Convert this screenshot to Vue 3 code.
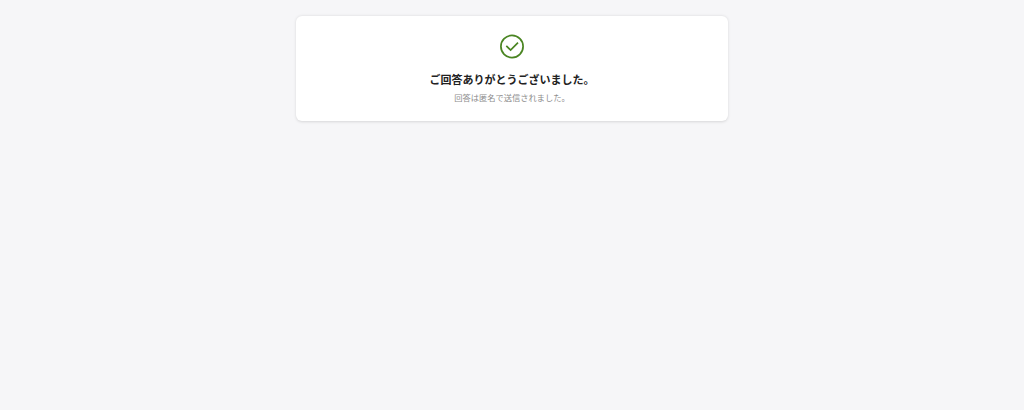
<template>
  <main class="page">
    <section class="card">
      <svg class="icon" viewBox="0 0 24 24" fill="none">
        <circle cx="12" cy="12" r="11.1" />
        <path d="M6.3 11.3 10.6 15.6 18 8.2" />
      </svg>
      <h1 class="title">{{ title }}</h1>
      <p class="note">{{ note }}</p>
    </section>
  </main>
</template>

<script setup>
const title = 'ご回答ありがとうございました。'
const note = '回答は匿名で送信されました。'
</script>

<style>
body {
  background: #f6f6f8;
}
</style>

<style scoped>
.page {
  display: flex;
  justify-content: center;
  align-items: flex-start;
  box-sizing: border-box;
  min-height: 100vh;
  padding-top: 16px;
  font-family: 'Noto Sans CJK JP', sans-serif;
}
.card {
  display: flex;
  flex-direction: column;
  align-items: center;
  box-sizing: border-box;
  width: 432px;
  height: 105px;
  padding-top: 18px;
  background: #fff;
  border-radius: 6px;
  box-shadow: 0 0.5px 3px rgba(0, 0, 0, 0.13);
}
.icon {
  width: 24px;
  height: 25px;
  stroke: #4a8522;
  stroke-width: 1.7;
}
.title {
  margin: 12px 0 0;
  font-size: 11px;
  line-height: 16px;
  font-weight: 700;
  color: #222;
}
.note {
  margin: 3px 0 0;
  font-size: 8.25px;
  line-height: 14px;
  color: #8c8c8c;
}
</style>
